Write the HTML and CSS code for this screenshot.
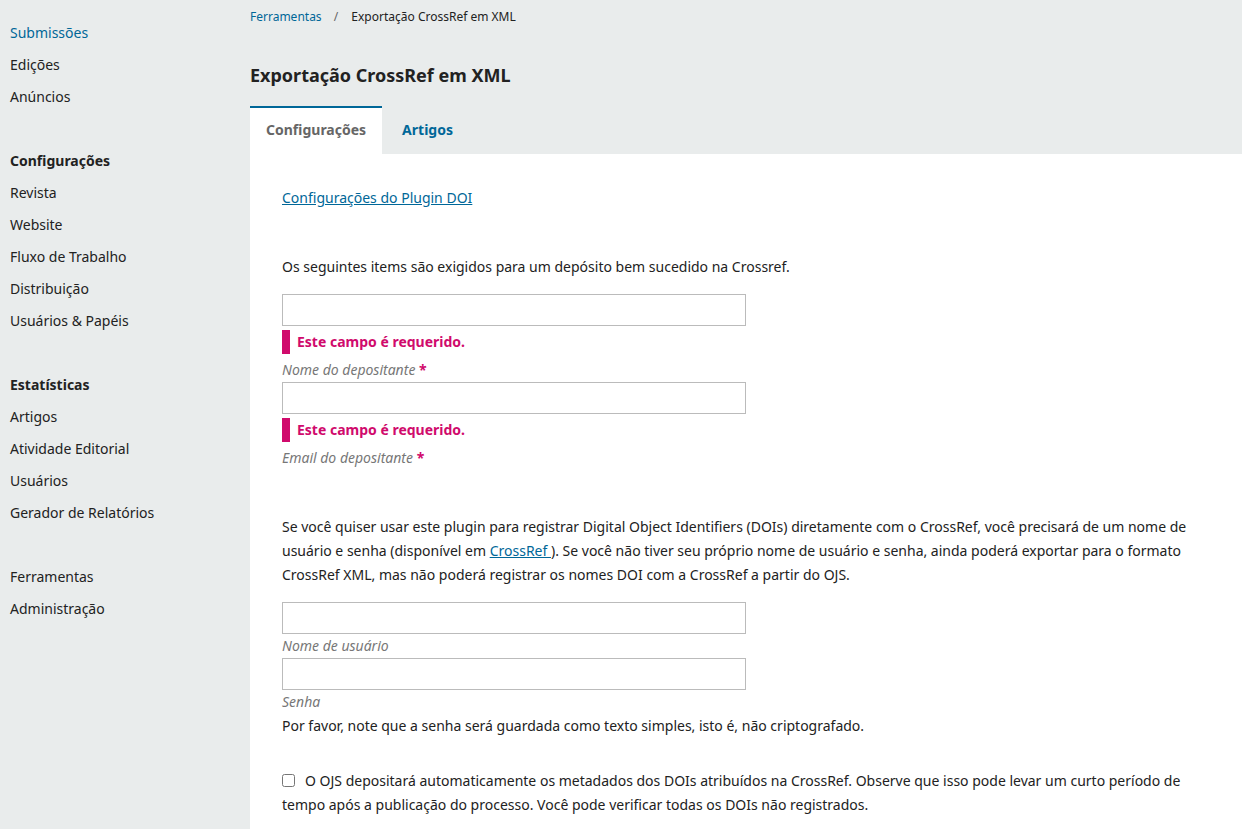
FILE: index.html
```html
<!DOCTYPE html>
<html lang="pt">
<head>
<meta charset="utf-8">
<title>Exportação CrossRef em XML</title>
<link rel="stylesheet" href="styles.css">
</head>
<body>
<div class="app">
  <nav class="sidebar">
    <ul class="nav-group">
      <li><a class="nav-link current" href="#">Submissões</a></li>
      <li><a class="nav-link" href="#">Edições</a></li>
      <li><a class="nav-link" href="#">Anúncios</a></li>
    </ul>
    <ul class="nav-group">
      <li class="nav-heading">Configurações</li>
      <li><a class="nav-link" href="#">Revista</a></li>
      <li><a class="nav-link" href="#">Website</a></li>
      <li><a class="nav-link" href="#">Fluxo de Trabalho</a></li>
      <li><a class="nav-link" href="#">Distribuição</a></li>
      <li><a class="nav-link" href="#">Usuários &amp; Papéis</a></li>
    </ul>
    <ul class="nav-group">
      <li class="nav-heading">Estatísticas</li>
      <li><a class="nav-link" href="#">Artigos</a></li>
      <li><a class="nav-link" href="#">Atividade Editorial</a></li>
      <li><a class="nav-link" href="#">Usuários</a></li>
      <li><a class="nav-link" href="#">Gerador de Relatórios</a></li>
    </ul>
    <ul class="nav-group">
      <li><a class="nav-link" href="#">Ferramentas</a></li>
      <li><a class="nav-link" href="#">Administração</a></li>
    </ul>
  </nav>
  <main class="main">
    <div class="breadcrumbs">
      <a class="crumb-link" href="#">Ferramentas</a>
      <span class="crumb-sep">/</span>
      <span class="crumb-current">Exportação CrossRef em XML</span>
    </div>
    <h1 class="page-title">Exportação CrossRef em XML</h1>
    <div class="tabs">
      <a class="tab active" href="#">Configurações</a>
      <a class="tab" href="#">Artigos</a>
    </div>
    <div class="panel">
      <p class="plugin-link-row"><a class="link" href="#">Configurações do Plugin DOI</a></p>

      <p class="text intro">Os seguintes items são exigidos para um depósito bem sucedido na Crossref.</p>

      <div class="field">
        <input class="input" type="text">
        <div class="error">Este campo é requerido.</div>
        <label class="label">Nome do depositante <span class="req">*</span></label>
      </div>
      <div class="field">
        <input class="input" type="text">
        <div class="error">Este campo é requerido.</div>
        <label class="label">Email do depositante <span class="req">*</span></label>
      </div>

      <p class="text description">Se você quiser usar este plugin para registrar Digital Object Identifiers (DOIs) diretamente com o CrossRef, você precisará de um nome de usuário e senha (disponível em <a class="link" href="#">CrossRef&nbsp;</a>). Se você não tiver seu próprio nome de usuário e senha, ainda poderá exportar para o formato CrossRef XML, mas não poderá registrar os nomes DOI com a CrossRef a partir do OJS.</p>

      <div class="field plain">
        <input class="input" type="text">
        <label class="label">Nome de usuário</label>
      </div>
      <div class="field plain">
        <input class="input" type="password">
        <label class="label">Senha</label>
      </div>
      <p class="text">Por favor, note que a senha será guardada como texto simples, isto é, não criptografado.</p>

      <p class="text checkbox-row"><input class="checkbox" type="checkbox">O OJS depositará automaticamente os metadados dos DOIs atribuídos na CrossRef. Observe que isso pode levar um curto período de tempo após a publicação do processo. Você pode verificar todas os DOIs não registrados.</p>
    </div>
  </main>
</div>
</body>
</html>
```

FILE: styles.css
```css
* { box-sizing: border-box; }

html, body {
  margin: 0;
  padding: 0;
  height: 100%;
}

body {
  font-family: "Noto Sans", "Liberation Sans", sans-serif;
  font-size: 14px;
  color: #222;
  background: #e9ecec;
}

.app {
  display: flex;
  min-height: 100%;
}

.sidebar {
  width: 250px;
  flex: 0 0 250px;
  padding: 17px 0 0 10px;
  background: #e9ecec;
}

.nav-group {
  list-style: none;
  margin: 0 0 32px;
  padding: 0;
}

.nav-group li {
  line-height: 32px;
  height: 32px;
}

.nav-heading {
  font-weight: 700;
  color: #222;
}

.nav-link {
  color: #222;
  text-decoration: none;
}

.nav-link.current {
  color: #006798;
}

.main {
  flex: 1;
  display: flex;
  flex-direction: column;
  background: #e9ecec;
}

.breadcrumbs {
  font-size: 12px;
  line-height: 18px;
  padding-top: 8px;
  height: 26px;
}

.crumb-link {
  color: #006798;
  text-decoration: none;
}

.crumb-sep {
  color: #666;
  margin: 0 10px 0 9px;
}

.crumb-current {
  color: #222;
}

.page-title {
  margin: 0;
  padding-top: 36px;
  font-size: 18px;
  line-height: 26px;
  font-weight: 700;
  color: #222;
  height: 80px;
}

.tabs {
  display: flex;
  height: 48px;
}

.tab {
  font-weight: 700;
  font-size: 14px;
  line-height: 44px;
  height: 48px;
  padding: 0 16px;
  color: #006798;
  text-decoration: none;
  border-top: 2px solid transparent;
}

.tab + .tab {
  padding-left: 20px;
}

.tab.active {
  background: #fff;
  color: #666;
  border-top-color: #006798;
}

.panel {
  flex: 1;
  background: #fff;
  padding: 32px 32px 20px;
}

.text {
  margin: 0;
  line-height: 24px;
}

.plugin-link-row {
  margin: 0 0 45px;
  line-height: 24px;
}

.link {
  color: #006798;
  text-decoration: underline;
}

.intro {
  margin-bottom: 15px;
}

.field {
  display: flex;
  flex-direction: column;
  align-items: flex-start;
}

.input {
  display: block;
  width: 464px;
  height: 32px;
  border: 1px solid #bbb;
  border-radius: 0;
  background: #fff;
  margin: 0;
  padding: 0 8px;
  font: inherit;
}

.error {
  margin: 4px 0;
  height: 24px;
  line-height: 24px;
  border-left: 8px solid #d00a6c;
  padding-left: 7px;
  color: #d00a6c;
  font-weight: 700;
  font-size: 14px;
}

.label {
  font-style: italic;
  color: #777;
  line-height: 24px;
  font-size: 14px;
}

.req {
  color: #d00a6c;
  font-style: normal;
  font-weight: 700;
}

.description {
  margin-top: 45px;
  margin-bottom: 15px;
}

.checkbox-row {
  margin-top: 31px;
}

.checkbox {
  width: 13px;
  height: 13px;
  margin: 0 10px 0 0;
  vertical-align: -1px;
}
```
